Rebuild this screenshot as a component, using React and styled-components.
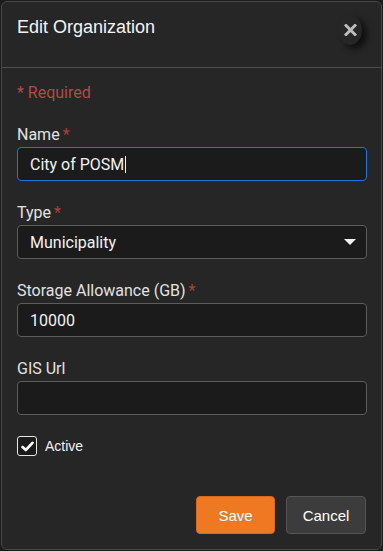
import React from "react";
import styled, { createGlobalStyle } from "styled-components";

const Global = createGlobalStyle`
  html, body { margin: 0; padding: 0; background: #1c1c1c; }
  body { width: 383px; height: 551px; overflow: hidden; }
  * { box-sizing: border-box; }
`;

const Page = styled.div`
  padding: 1px 0 0 1px;
`;

const Modal = styled.div`
  width: 381px;
  height: 549px;
  background: #262626;
  border: 1px solid #474747;
  border-radius: 6px;
  display: flex;
  flex-direction: column;
`;

const Header = styled.div`
  height: 66px;
  padding: 14px 16px 0 15px;
  border-bottom: 1px solid #4e4e4e;
  display: flex;
  justify-content: space-between;
  align-items: flex-start;
`;

const Title = styled.h2`
  margin: 0;
  font-family: "Liberation Sans", Arial, sans-serif;
  font-weight: 400;
  font-size: 18px;
  line-height: 22px;
  color: #f4f4f4;
`;

const CloseButton = styled.button`
  width: 24px;
  height: 30px;
  margin-top: -1px;
  margin-right: 3px;
  padding: 0;
  border: none;
  border-radius: 50%;
  background: #262626;
  box-shadow: 5px 4px 6px rgba(0, 0, 0, 0.6);
  display: flex;
  align-items: center;
  justify-content: center;
  cursor: pointer;
`;

const Body = styled.div`
  padding: 15px 14px 0 15px;
  font-family: Roboto, "Noto Sans", sans-serif;
`;

const Required = styled.div`
  font-size: 16px;
  line-height: 20px;
  color: #b24a48;
  margin-bottom: 22px;
`;

const Field = styled.div`
  margin-bottom: 22px;
`;

const Label = styled.div`
  font-size: 16px;
  line-height: 20px;
  color: #e2e2e2;
  margin-bottom: 2px;
`;

const Star = styled.span`
  color: #a8413f;
  margin-left: 3px;
`;

const InputBox = styled.div`
  position: relative;
  height: 34px;
  width: 350px;
  background: #1b1b1b;
  border: 1px solid ${(p) => (p.$focused ? "#1f74de" : "#5c5c5c")};
  border-radius: 4px;
  padding: 0 12px;
  display: flex;
  align-items: center;
  font-size: 16px;
  color: #f2f2f2;
`;

const Caret = styled.span`
  display: inline-block;
  width: 1px;
  height: 17px;
  background: #f2f2f2;
  margin-left: 1px;
`;

const Chevron = styled.svg`
  position: absolute;
  right: 10px;
  top: 13px;
`;

const CheckRow = styled.label`
  display: flex;
  align-items: center;
  gap: 8px;
  margin-top: -1px;
  font-family: "Liberation Sans", Arial, sans-serif;
  font-size: 14px;
  color: #f0f0f0;
`;

const CheckBox = styled.span`
  width: 20px;
  height: 20px;
  border: 1.5px solid #e6e6e6;
  border-radius: 3px;
  background: #1b1b1b;
  display: flex;
  align-items: center;
  justify-content: center;
`;

const Footer = styled.div`
  margin-top: auto;
  padding: 0 15px 15px 0;
  display: flex;
  justify-content: flex-end;
  gap: 11px;
`;

const Button = styled.button`
  height: 38px;
  width: ${(p) => (p.$primary ? "79px" : "80px")};
  border-radius: 4px;
  border: 1px solid ${(p) => (p.$primary ? "#d9691c" : "#555555")};
  background: ${(p) => (p.$primary ? "#ef7823" : "#3c3c3c")};
  color: #ffffff;
  font-family: "Liberation Sans", Arial, sans-serif;
  font-size: 15px;
  padding: 0;
  cursor: pointer;
`;

export default function App() {
  return (
    <>
      <Global />
      <Page>
        <Modal>
          <Header>
            <Title>Edit Organization</Title>
            <CloseButton aria-label="Close">
              <svg width="13" height="12" viewBox="0 0 13 12">
                <path d="M2 1.5 L11 10.5 M11 1.5 L2 10.5" stroke="#bdbdbd" strokeWidth="3" strokeLinecap="square" />
              </svg>
            </CloseButton>
          </Header>
          <Body>
            <Required>* Required</Required>
            <Field>
              <Label>Name<Star>*</Star></Label>
              <InputBox $focused>City of POSM<Caret /></InputBox>
            </Field>
            <Field>
              <Label>Type<Star>*</Star></Label>
              <InputBox>
                Municipality
                <Chevron width="12" height="6" viewBox="0 0 12 6">
                  <path d="M0 0 H12 L6 6 Z" fill="#f2f2f2" />
                </Chevron>
              </InputBox>
            </Field>
            <Field>
              <Label>Storage Allowance (GB)<Star>*</Star></Label>
              <InputBox>10000</InputBox>
            </Field>
            <Field>
              <Label>GIS Url</Label>
              <InputBox />
            </Field>
            <CheckRow>
              <CheckBox>
                <svg width="13" height="11" viewBox="0 0 13 11">
                  <path d="M1.5 6 L4.8 9 L11.5 1.8" stroke="#ffffff" strokeWidth="2.6" fill="none" strokeLinecap="round" strokeLinejoin="round" />
                </svg>
              </CheckBox>
              Active
            </CheckRow>
          </Body>
          <Footer>
            <Button $primary>Save</Button>
            <Button>Cancel</Button>
          </Footer>
        </Modal>
      </Page>
    </>
  );
}
